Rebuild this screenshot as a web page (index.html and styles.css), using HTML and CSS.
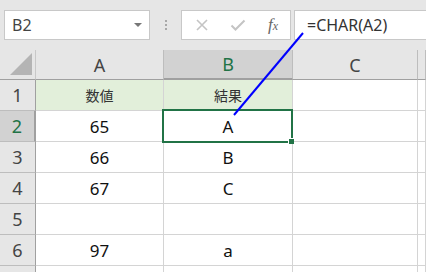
FILE: index.html
```html
<!DOCTYPE html>
<html lang="ja">
<head>
    <meta charset="UTF-8">
    <meta name="viewport" content="width=device-width, initial-scale=1.0">
    <title>CHAR</title>
    <link rel="stylesheet" href="styles.css">
</head>
<body>
    <div class="app">
        <div class="toolbar">
            <div class="namebox">
                <span>B2</span>
                <span class="caret"></span>
            </div>
            <div class="grip"><i></i><i></i><i></i></div>
            <div class="fx-buttons">
                <svg class="icon" width="14" height="14" viewBox="0 0 14 14">
                    <path d="M2 2 L12 12 M12 2 L2 12" stroke="#c4c4c4" stroke-width="1.6" fill="none"/>
                </svg>
                <svg class="icon" width="16" height="14" viewBox="0 0 16 14">
                    <path d="M1.5 7.5 L5.5 11.5 L14.5 2.5" stroke="#c4c4c4" stroke-width="2" fill="none"/>
                </svg>
                <span class="fx">f<small>x</small></span>
            </div>
            <div class="formula">=CHAR(A2)</div>
        </div>

        <div class="sheet">
            <!-- 列見出し -->
            <div class="hd corner"></div>
            <div class="hd col">A</div>
            <div class="hd col active-col">B</div>
            <div class="hd col">C</div>
            <div class="hd col"></div>

            <div class="hd row">1</div>
            <div class="cell head">数値</div>
            <div class="cell head">結果</div>
            <div class="cell"></div>
            <div class="cell"></div>

            <div class="hd row active-row">2</div>
            <div class="cell">65</div>
            <div class="cell selected">A</div>
            <div class="cell"></div>
            <div class="cell"></div>

            <div class="hd row">3</div>
            <div class="cell">66</div>
            <div class="cell">B</div>
            <div class="cell"></div>
            <div class="cell"></div>

            <div class="hd row">4</div>
            <div class="cell">67</div>
            <div class="cell">C</div>
            <div class="cell"></div>
            <div class="cell"></div>

            <div class="hd row">5</div>
            <div class="cell"></div>
            <div class="cell"></div>
            <div class="cell"></div>
            <div class="cell"></div>

            <div class="hd row">6</div>
            <div class="cell">97</div>
            <div class="cell">a</div>
            <div class="cell"></div>
            <div class="cell"></div>

            <!-- 7行目は画面の下端で切れている -->
            <div class="hd row"></div>
            <div class="cell"></div>
            <div class="cell"></div>
            <div class="cell"></div>
            <div class="cell"></div>
        </div>

        <svg class="pointer" width="426" height="272" viewBox="0 0 426 272">
            <line x1="303" y1="33" x2="234" y2="115" stroke="#0000ff" stroke-width="2"/>
        </svg>
    </div>
</body>
</html>
```

FILE: styles.css
```css
:root {
    --bar-bg: #e6e6e6;
    --head-bg: #e6e6e6;
    --head-active: #d2d2d2;
    --grid: #d4d4d4;
    --head-line: #bdbdbd;
    --excel-green: #217346;
    --fill-green: #e2efda;
}

body {
    margin: 0;
    background: var(--bar-bg);
    font-family: "Noto Sans", "Noto Sans CJK JP", sans-serif;
    color: #222;
    overflow: hidden;
}

.app {
    position: relative;
    width: 426px;
    height: 272px;
    overflow: hidden;
}

/* 数式バー */
.toolbar {
    display: flex;
    align-items: center;
    height: 50px;
    padding-left: 4px;
    box-sizing: border-box;
}

.namebox,
.fx-buttons,
.formula {
    height: 30px;
    box-sizing: border-box;
    background: #fff;
    border: 1px solid #c8c8c8;
    display: flex;
    align-items: center;
}

.namebox {
    width: 146px;
    padding: 0 7px;
    justify-content: space-between;
    font-size: 16px;
    color: #444;
}

.caret {
    width: 0;
    height: 0;
    border-left: 4px solid transparent;
    border-right: 4px solid transparent;
    border-top: 4px solid #777;
}

.grip {
    width: 31px;
    display: flex;
    flex-direction: column;
    align-items: center;
    gap: 2px;
}

.grip i {
    width: 2px;
    height: 2px;
    background: #a8a8a8;
}

.fx-buttons {
    width: 110px;
    padding: 0 10px 0 13px;
    justify-content: space-between;
}

.fx {
    font-family: "Liberation Serif", serif;
    font-style: italic;
    font-size: 17px;
    color: #666;
    margin-right: 2px;
}

.fx small {
    font-size: 12px;
}

.formula {
    flex: 1;
    margin-left: 3px;
    border-right: none;
    padding-left: 12px;
    font-size: 16px;
    color: #333;
}

/* シート */
.sheet {
    display: grid;
    grid-template-columns: 36px 128px 129px 125px 1fr;
    grid-template-rows: 30px repeat(7, 31px);
    background: #fff;
}

.hd {
    background: var(--head-bg);
    border-right: 1px solid var(--head-line);
    border-bottom: 1px solid var(--head-line);
    display: flex;
    align-items: center;
    justify-content: center;
    font-size: 18px;
    color: #444;
}

.hd.col {
    border-bottom-color: #a0a0a0;
}

.hd.row {
    border-right-color: #a0a0a0;
}

.corner {
    position: relative;
    border-bottom-color: #a0a0a0;
    border-right-color: #c8c8c8;
}

.corner::after {
    content: "";
    position: absolute;
    right: 3px;
    bottom: 4px;
    width: 22px;
    height: 22px;
    background: #b4b4b4;
    clip-path: polygon(100% 0, 100% 100%, 0 100%);
}

.active-col {
    background: var(--head-active);
    color: var(--excel-green);
    border-bottom: 2px solid var(--excel-green);
}

.active-row {
    background: var(--head-active);
    color: var(--excel-green);
    border-right: 2px solid var(--excel-green);
}

.cell {
    border-right: 1px solid var(--grid);
    border-bottom: 1px solid var(--grid);
    display: flex;
    align-items: center;
    justify-content: center;
    font-size: 17px;
    color: #111;
}

.cell.head {
    background: var(--fill-green);
    font-size: 14px;
    color: #333;
}

.selected {
    position: relative;
}

.selected::before {
    content: "";
    position: absolute;
    top: -2px;
    left: -2px;
    right: -1px;
    bottom: -2px;
    border: 2px solid var(--excel-green);
}

.selected::after {
    content: "";
    position: absolute;
    right: -2px;
    bottom: -3px;
    width: 5px;
    height: 5px;
    background: var(--excel-green);
    border-left: 1px solid #fff;
    border-top: 1px solid #fff;
}

.pointer {
    position: absolute;
    top: 0;
    left: 0;
    pointer-events: none;
}
```
